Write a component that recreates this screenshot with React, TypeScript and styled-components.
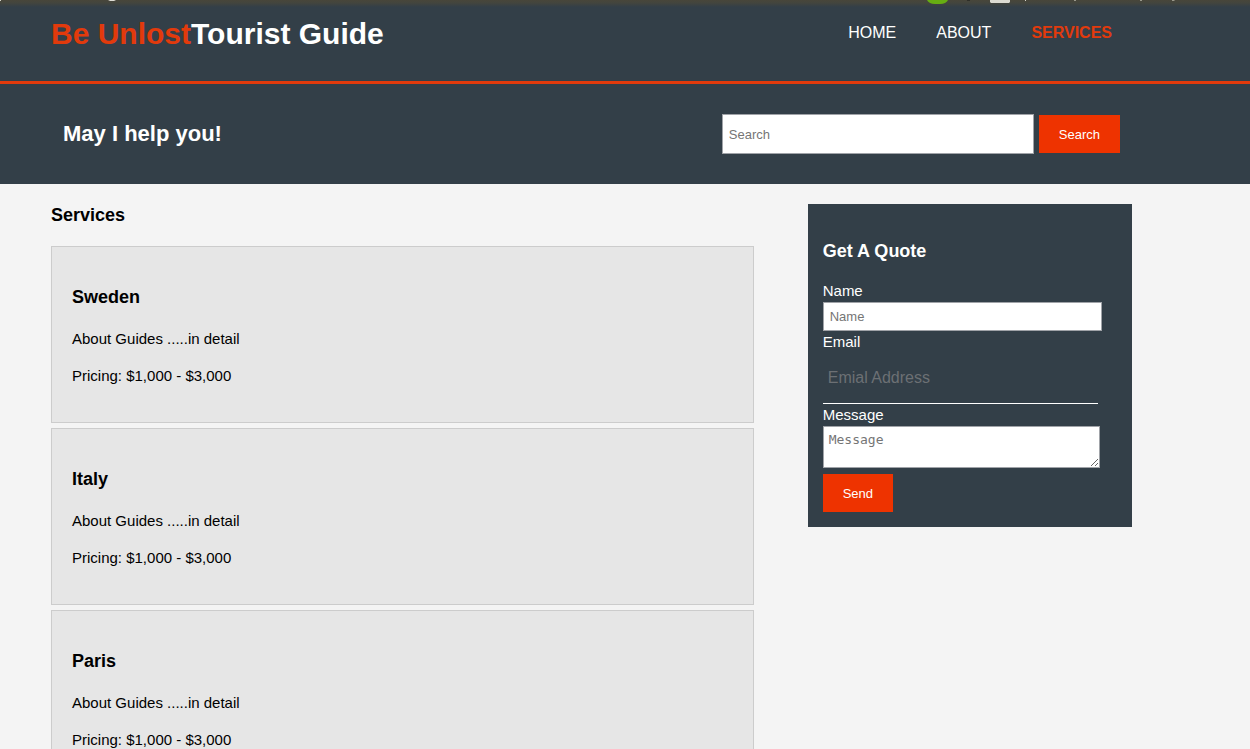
import React from "react";
import styled, { createGlobalStyle } from "styled-components";

const dark = "#333f48";
const accent = "#ee3300";
const headerAccent = "#e23a0c";

const GlobalStyle = createGlobalStyle`
  body {
    margin: 0;
    background: #f4f4f4;
    color: #000;
    font: 15px/22px "Liberation Sans", Arial, sans-serif;
  }
`;

const Container = styled.div`
  padding: 0 118px 0 51px;
`;

const Header = styled.header`
  position: relative;
  background: linear-gradient(#48463a 0, #43453e 3px, ${dark} 7px);
  color: #fff;
  border-bottom: 3px solid ${headerAccent};
`;

const TopStrip = styled.svg`
  position: absolute;
  top: 0;
  left: 0;
`;

const HeaderRow = styled(Container)`
  display: flex;
  justify-content: space-between;
  align-items: flex-start;
  height: 81px;
`;

const Logo = styled.h1`
  margin: 0;
  padding-top: 12px;
  font-size: 30px;
  line-height: 44px;

  span {
    color: ${headerAccent};
  }
`;

const Nav = styled.nav`
  display: flex;
  padding-top: 22px;
`;

const NavLink = styled.a<{ $current?: boolean }>`
  padding: 0 20px;
  font-size: 16px;
  text-decoration: none;
  color: ${(p) => (p.$current ? headerAccent : "#fff")};
  font-weight: ${(p) => (p.$current ? "bold" : "normal")};
`;

const SearchBar = styled.section`
  background: ${dark};
  color: #fff;
`;

const SearchRow = styled(Container)`
  display: flex;
  justify-content: space-between;
  align-items: center;
  height: 100px;

  h2 {
    margin: 0 12px;
    font-size: 22px;
    line-height: 24px;
  }
`;

const SearchForm = styled.form`
  display: flex;
  align-items: center;
  gap: 5px;
  margin-right: 12px;
`;

const Field = styled.input`
  box-sizing: content-box;
  display: block;
  width: 90%;
  height: 27px;
  padding: 0 6px;
  border: 1px solid #a0a3a8;
  border-radius: 0;
  background: #fff;
  font: 13px "Liberation Sans", Arial, sans-serif;

  &::placeholder {
    color: #757575;
  }
`;

const SearchField = styled(Field)`
  width: 298px;
  height: 38px;
`;

const EmailField = styled(Field)`
  height: 50px;
  padding: 0 5px;
  border: 0;
  border-bottom: 1px solid #fff;
  background: transparent;
  color: #fff;
  font-size: 16px;

  &::placeholder {
    color: #6c7074;
  }
`;

const MessageField = styled.textarea`
  display: block;
  width: 90%;
  height: 30px;
  margin-bottom: 6px;
  padding: 5px;
  border: 1px solid #a0a3a8;
  background: #fff;
  font: 13px/15px "DejaVu Sans Mono", monospace;

  &::placeholder {
    color: #757575;
  }
`;

const Button = styled.button`
  height: 38px;
  padding: 0 20px;
  border: 0;
  background: ${accent};
  color: #fff;
  font: 13px "Liberation Sans", Arial, sans-serif;
`;

const Columns = styled(Container)`
  display: flex;
  justify-content: space-between;
  align-items: flex-start;
  padding-top: 20px;
`;

const Main = styled.main`
  width: 65%;
`;

const Heading = styled.h3`
  margin: 18px 0;
  font-size: 18px;
  line-height: 25px;
`;

const PageTitle = styled(Heading)`
  margin: 0 0 20px;
  line-height: 22px;
`;

const QuoteTitle = styled(Heading)`
  margin: 20px 0 16px;
`;

const ServiceList = styled.ul`
  display: grid;
  gap: 5px;
  margin: 0;
  padding: 0;
  list-style: none;
`;

const ServiceCard = styled.li`
  display: flow-root;
  padding: 20px;
  border: 1px solid #ccc;
  background: #e6e6e6;

  p {
    margin: 15px 0;
  }
`;

const Sidebar = styled.aside`
  box-sizing: border-box;
  display: flow-root;
  width: 30%;
  padding: 15px;
  background: ${dark};
  color: #fff;
`;

const Label = styled.label`
  display: block;
`;

const services = ["Sweden", "Italy", "Paris"];

export default function App() {
  return (
    <>
      <GlobalStyle />
      <Header>
        <TopStrip width="1250" height="6" viewBox="0 0 1250 6" aria-hidden="true">
          <path d="M927 0h21q-2 4-8 4h-5q-6 0-8-4z" fill="#67ad12" />
          <path d="M990 0h20v2l-1 1h-18l-1-1z" fill="#dcdbd2" />
          <path d="M108 0h8l-2 1h-4z" fill="#deddd5" />
          <path d="M0 0h1v1H0zM1025 0h1v1h-1z" fill="#d5d3c8" />
          <path d="M1074 0h2v1h-2zM1140 0h2v1h-2zM1172 0h3l-1 1h-2z" fill="#99978a" />
          <path d="M967 0h3v1h-3z" fill="#2e2e28" />
        </TopStrip>
        <HeaderRow>
          <Logo>
            <span>Be Unlost</span>Tourist Guide
          </Logo>
          <Nav>
            <NavLink href="#home">HOME</NavLink>
            <NavLink href="#about">ABOUT</NavLink>
            <NavLink href="#services" $current aria-current="page">
              SERVICES
            </NavLink>
          </Nav>
        </HeaderRow>
      </Header>

      <SearchBar>
        <SearchRow>
          <h2>May I help you!</h2>
          <SearchForm>
            <SearchField type="text" placeholder="Search" aria-label="Search" />
            <Button type="button">Search</Button>
          </SearchForm>
        </SearchRow>
      </SearchBar>

      <Columns>
        <Main id="services">
          <PageTitle as="h2">Services</PageTitle>
          <ServiceList>
            {services.map((name) => (
              <ServiceCard key={name}>
                <Heading>{name}</Heading>
                <p>About Guides .....in detail</p>
                <p>Pricing: $1,000 - $3,000</p>
              </ServiceCard>
            ))}
          </ServiceList>
        </Main>
        <Sidebar>
          <QuoteTitle>Get A Quote</QuoteTitle>
          <form>
            <Label htmlFor="name">Name</Label>
            <Field id="name" type="text" placeholder="Name" />
            <Label htmlFor="email">Email</Label>
            <EmailField id="email" type="email" placeholder="Emial Address" />
            <Label htmlFor="message">Message</Label>
            <MessageField id="message" placeholder="Message" />
            <Button type="button">Send</Button>
          </form>
        </Sidebar>
      </Columns>
    </>
  );
}
